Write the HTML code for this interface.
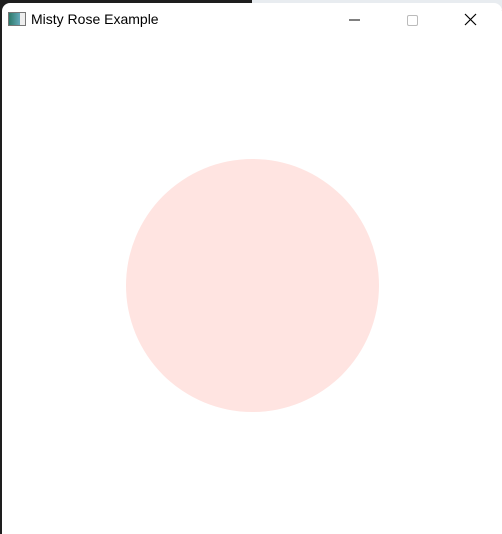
<!DOCTYPE html>
<html><head><style>
body{margin:0;width:502px;height:534px;overflow:hidden;background:#1e1e1e;position:relative;font-family:"Liberation Sans",sans-serif}
.bgr{position:absolute;left:252px;top:0;width:250px;height:10px;background:#e8ecf0}
.win{position:absolute;left:2px;top:3px;width:500px;height:531px;background:#fff;border-radius:8px 8px 0 0}
.title{position:absolute;left:29px;top:8px;font-size:14px;color:#000}
.ico{position:absolute;left:6px;top:9px;width:16px;height:12px;border:1px solid #777;background:linear-gradient(90deg,#2d7a6a,#6ab 70%,#eee 70%)}
.circle{position:absolute;left:124px;top:156px;width:253px;height:253px;border-radius:50%;background:#ffe4e1}
</style></head><body>
<div class="bgr"></div>
<div class="win">
<div class="ico"></div>
<div class="title">Misty Rose Example</div>
<svg style="position:absolute;left:339px;top:6px" width="160" height="22">
<line x1="8" y1="11" x2="19" y2="11" stroke="#000" stroke-width="1"/>
<rect x="66.5" y="6.5" width="10" height="10" rx="1.5" fill="none" stroke="#bbb"/>
<path d="M124 5L135 16M135 5L124 16" stroke="#000" stroke-width="1.2"/>
</svg>
<div class="circle"></div>
</div>
</body></html>
